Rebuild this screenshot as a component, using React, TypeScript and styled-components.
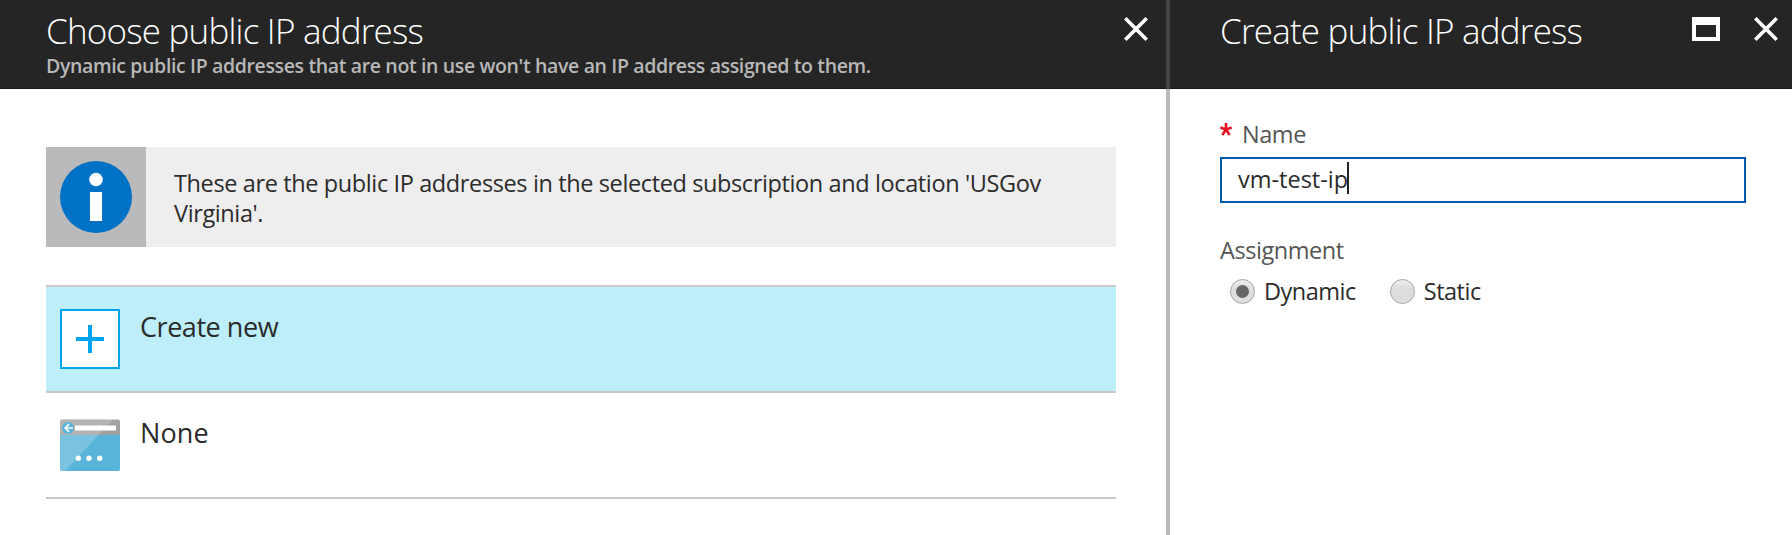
import React from "react";
import styled, { createGlobalStyle } from "styled-components";

const GlobalStyle = createGlobalStyle`
  * { box-sizing: border-box; }
  body {
    margin: 0;
    background: #fff;
    color: #2b2b2b;
    font-family: "Open Sans", "Noto Sans", sans-serif;
    overflow: hidden;
  }
  h1, p { margin: 0; }
`;

const Page = styled.main`
  display: flex;
  width: 1792px;
  height: 535px;
`;

const Blade = styled.section<{ $width?: number }>`
  display: flex;
  flex-direction: column;
  ${(p) => (p.$width ? `flex: 0 0 ${p.$width}px;` : "flex: 1;")}
`;

const Divider = styled.div`
  flex: 0 0 4px;
  background: linear-gradient(#444 89px, #b9b9b9 89px);
`;

const Header = styled.header<{ $left: number; $right: number }>`
  display: flex;
  justify-content: space-between;
  align-items: flex-start;
  height: 89px;
  padding: 11px ${(p) => p.$right}px 0 ${(p) => p.$left}px;
  background: #252525;
  border-bottom: 1px solid #161616;
`;

const Title = styled.h1`
  font-size: 35px;
  font-weight: 300;
  line-height: 40px;
  letter-spacing: -0.79px;
  color: #fff;
  white-space: nowrap;
`;

const Subtitle = styled.p`
  margin-top: 2px;
  font-size: 19.5px;
  font-weight: 600;
  line-height: 26px;
  letter-spacing: -0.362px;
  color: #b8b8b8;
  white-space: nowrap;
`;

const WindowButtons = styled.div`
  display: flex;
  gap: 34px;
  padding-top: 6px;
`;

const IconButton = styled.button`
  display: block;
  padding: 0;
  border: 0;
  background: none;
  svg { display: block; }
`;

const PickerBody = styled.div`
  padding: 58px 50px 0 46px;
`;

const InfoBox = styled.div`
  display: flex;
  height: 100px;
  background: #eee;
`;

const InfoBadge = styled.div`
  display: flex;
  align-items: center;
  justify-content: center;
  width: 100px;
  background: #bababa;
`;

const InfoText = styled.p`
  flex: 1;
  padding: 21px 40px 0 28px;
  font-size: 23.5px;
  line-height: 30px;
  letter-spacing: -0.38px;
`;

const OptionList = styled.div`
  margin-top: 38px;
  border-top: 2px solid #c9c9c9;
`;

const Option = styled.div<{ $selected?: boolean }>`
  display: flex;
  gap: 20px;
  height: 106px;
  padding: 22px 14px 0;
  border-bottom: 2px solid #c9c9c9;
  background: ${(p) => (p.$selected ? "#bdeefa" : "#fff")};
`;

const OptionLabel = styled.span<{ $tracking: number }>`
  font-size: 27px;
  line-height: 36px;
  letter-spacing: ${(p) => p.$tracking}px;
`;

const FormBody = styled.div`
  padding: 30px 46px 0 50px;
`;

const FieldLabel = styled.label`
  display: flex;
  font-size: 23.5px;
  line-height: 30px;
  letter-spacing: -0.45px;
  color: #555;
`;

const RequiredMark = styled.svg`
  width: 12px;
  height: 13px;
  margin: 4px 10px 0 0;
`;

const TextField = styled.div`
  display: flex;
  align-items: center;
  height: 46px;
  margin: 8px 0 32px;
  padding: 0 16px 2px;
  border: 2px solid #0058ad;
  font-size: 23.5px;
  letter-spacing: 0;
`;

const Caret = styled.i`
  width: 2px;
  height: 32px;
  margin: 0 0 2px -1px;
  background: #222;
  align-self: center;
`;

const RadioRow = styled.div`
  display: flex;
  gap: 34px;
  margin-top: 11px;
  padding-left: 10px;
`;

const Radio = styled.label`
  display: flex;
  align-items: center;
  gap: 9px;
  font-size: 23.5px;
  line-height: 30px;
  letter-spacing: -0.5px;
`;

const RadioDot = styled.span<{ $checked?: boolean }>`
  display: flex;
  align-items: center;
  justify-content: center;
  width: 25px;
  height: 25px;
  border: 1px solid #a6a6a6;
  border-radius: 50%;
  background: linear-gradient(#eee, #dcdcdc 40%, #dedede);
  &::after {
    content: "";
    width: 13px;
    height: 13px;
    border-radius: 50%;
    background: ${(p) => (p.$checked ? "#666" : "transparent")};
  }
`;

const CloseIcon = () => (
  <svg width="24" height="24" viewBox="0 0 24 24" stroke="#fff" strokeWidth="3.6">
    <path d="M1.3 1.3 22.7 22.7M22.7 1.3 1.3 22.7" />
  </svg>
);

const MaximizeIcon = () => (
  <svg width="28" height="24" viewBox="0 0 28 24" fill="#fff" fillRule="evenodd">
    <path d="M0 0H28V24H0ZM4 8V20H24V8Z" />
  </svg>
);

const InfoIcon = () => (
  <svg width="72" height="72" viewBox="0 0 72 72">
    <circle cx="36" cy="36" r="36" fill="#0072c6" />
    <circle cx="36" cy="18.5" r="6.8" fill="#fff" />
    <path d="M30 31H42V60H30Z" fill="#fff" />
  </svg>
);

const PlusIcon = () => (
  <svg width="60" height="60" viewBox="0 0 60 60">
    <rect x="1" y="1" width="58" height="58" fill="#fff" stroke="#00a4ef" strokeWidth="2" />
    <path d="M28 16H32V28H44V32H32V44H28V32H16V28H28Z" fill="#00a4ef" />
  </svg>
);

const BrowserIcon = () => (
  <svg width="60" height="60" viewBox="0 0 60 60">
    <path d="M2 4.6H58Q60 4.6 60 6.6V20H0V6.6Q0 4.6 2 4.6Z" fill="#a0a1a2" />
    <path d="M0 20H60V54Q60 56 58 56H2Q0 56 0 54Z" fill="#59b4d9" />
    <path d="M2 4.6H53L5 56H2Q0 56 0 54V6.6Q0 4.6 2 4.6Z" fill="#fff" fillOpacity="0.2" />
    <rect x="15" y="10.5" width="41" height="5" fill="#fff" />
    <circle cx="8" cy="13" r="6" fill="#59b4d9" />
    <path d="M13 13H5.5M9 9.1 5.2 13 9 16.9" fill="none" stroke="#fff" strokeWidth="1.7" />
    <circle cx="18.3" cy="43.3" r="2.7" fill="#fff" />
    <circle cx="29" cy="43.3" r="2.7" fill="#fff" />
    <circle cx="39.7" cy="43.3" r="2.7" fill="#fff" />
  </svg>
);

export default function App() {
  return (
    <>
      <GlobalStyle />
      <Page>
        <Blade $width={1166}>
          <Header $left={46} $right={18}>
            <div>
              <Title>Choose public IP address</Title>
              <Subtitle>
                Dynamic public IP addresses that are not in use won't have an IP address assigned to them.
              </Subtitle>
            </div>
            <WindowButtons>
              <IconButton aria-label="Close"><CloseIcon /></IconButton>
            </WindowButtons>
          </Header>
          <PickerBody>
            <InfoBox>
              <InfoBadge><InfoIcon /></InfoBadge>
              <InfoText>
                These are the public IP addresses in the selected subscription and location 'USGov Virginia'.
              </InfoText>
            </InfoBox>
            <OptionList>
              <Option $selected>
                <PlusIcon />
                <OptionLabel $tracking={-0.45}>Create new</OptionLabel>
              </Option>
              <Option>
                <BrowserIcon />
                <OptionLabel $tracking={0.1}>None</OptionLabel>
              </Option>
            </OptionList>
          </PickerBody>
        </Blade>
        <Divider />
        <Blade>
          <Header $left={50} $right={14}>
            <Title>Create public IP address</Title>
            <WindowButtons>
              <IconButton aria-label="Maximize"><MaximizeIcon /></IconButton>
              <IconButton aria-label="Close"><CloseIcon /></IconButton>
            </WindowButtons>
          </Header>
          <FormBody>
            <FieldLabel>
              <RequiredMark viewBox="0 0 12 13" stroke="#e81123" strokeWidth="2.6">
                <path d="M6 6.6V0M6 6.6 0.3 4.6M6 6.6 11.7 4.6M6 6.6 2.3 12M6 6.6 9.7 12" />
              </RequiredMark>
              Name
            </FieldLabel>
            <TextField>vm-test-ip<Caret /></TextField>
            <FieldLabel>Assignment</FieldLabel>
            <RadioRow>
              <Radio><RadioDot $checked />Dynamic</Radio>
              <Radio><RadioDot />Static</Radio>
            </RadioRow>
          </FormBody>
        </Blade>
      </Page>
    </>
  );
}
